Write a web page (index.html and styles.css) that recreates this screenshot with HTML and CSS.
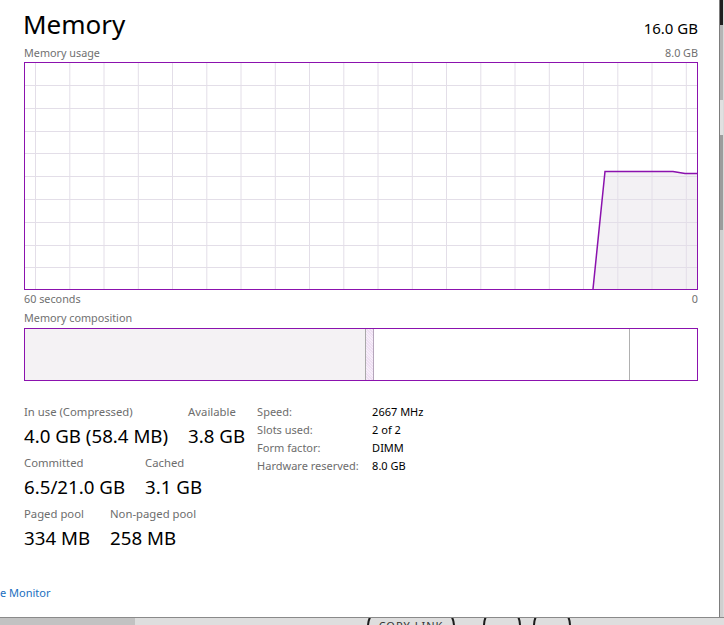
FILE: index.html
```html
<!DOCTYPE html>
<html lang="en">
<head>
    <meta charset="UTF-8">
    <meta name="viewport" content="width=device-width, initial-scale=1.0">
    <title>Memory</title>
    <link rel="stylesheet" href="styles.css">
</head>
<body>
    <div class="screen">
        <div class="window">
            <div class="title-row">
                <h1>Memory</h1>
                <span class="total">16.0 GB</span>
            </div>
            <div class="axis-row">
                <span>Memory usage</span>
                <span>8.0 GB</span>
            </div>
            <div class="graph">
                <svg width="672" height="226" viewBox="0 0 672 226">
                    <polygon class="area" points="568,226 580,108 648,108 660,110 672,110 672,226"/>
                    <g class="grid">
                        <line x1="10.5" y1="0" x2="10.5" y2="226"/>
                        <line x1="44.8" y1="0" x2="44.8" y2="226"/>
                        <line x1="79" y1="0" x2="79" y2="226"/>
                        <line x1="113.3" y1="0" x2="113.3" y2="226"/>
                        <line x1="147.5" y1="0" x2="147.5" y2="226"/>
                        <line x1="181.8" y1="0" x2="181.8" y2="226"/>
                        <line x1="216" y1="0" x2="216" y2="226"/>
                        <line x1="250.3" y1="0" x2="250.3" y2="226"/>
                        <line x1="284.5" y1="0" x2="284.5" y2="226"/>
                        <line x1="318.8" y1="0" x2="318.8" y2="226"/>
                        <line x1="353" y1="0" x2="353" y2="226"/>
                        <line x1="387.3" y1="0" x2="387.3" y2="226"/>
                        <line x1="421.5" y1="0" x2="421.5" y2="226"/>
                        <line x1="455.8" y1="0" x2="455.8" y2="226"/>
                        <line x1="490" y1="0" x2="490" y2="226"/>
                        <line x1="524.3" y1="0" x2="524.3" y2="226"/>
                        <line x1="558.5" y1="0" x2="558.5" y2="226"/>
                        <line x1="592.8" y1="0" x2="592.8" y2="226"/>
                        <line x1="627" y1="0" x2="627" y2="226"/>
                        <line x1="661.3" y1="0" x2="661.3" y2="226"/>
                        <line x1="0" y1="22.5" x2="672" y2="22.5"/>
                        <line x1="0" y1="45.5" x2="672" y2="45.5"/>
                        <line x1="0" y1="68.5" x2="672" y2="68.5"/>
                        <line x1="0" y1="90.5" x2="672" y2="90.5"/>
                        <line x1="0" y1="113.5" x2="672" y2="113.5"/>
                        <line x1="0" y1="136.5" x2="672" y2="136.5"/>
                        <line x1="0" y1="159.5" x2="672" y2="159.5"/>
                        <line x1="0" y1="182.5" x2="672" y2="182.5"/>
                        <line x1="0" y1="204.5" x2="672" y2="204.5"/>
                    </g>
                    <polyline class="trace" points="568,226 580,108.5 648,108.5 660,110.5 672,110.5"/>
                </svg>
            </div>
            <div class="axis-row">
                <span>60 seconds</span>
                <span>0</span>
            </div>
            <div class="caption">Memory composition</div>
            <div class="composition">
                <div class="seg in-use"></div>
                <div class="seg modified"></div>
                <div class="seg standby"></div>
                <div class="seg free"></div>
            </div>

            <div class="stats">
                <div class="stat-block">
                    <div class="stat-row">
                        <div class="stat">
                            <div class="stat-label">In use (Compressed)</div>
                            <div class="stat-value">4.0 GB (58.4 MB)</div>
                        </div>
                        <div class="stat">
                            <div class="stat-label">Available</div>
                            <div class="stat-value">3.8 GB</div>
                        </div>
                    </div>
                    <div class="stat-row">
                        <div class="stat">
                            <div class="stat-label">Committed</div>
                            <div class="stat-value">6.5/21.0 GB</div>
                        </div>
                        <div class="stat">
                            <div class="stat-label">Cached</div>
                            <div class="stat-value">3.1 GB</div>
                        </div>
                    </div>
                    <div class="stat-row">
                        <div class="stat">
                            <div class="stat-label">Paged pool</div>
                            <div class="stat-value">334 MB</div>
                        </div>
                        <div class="stat">
                            <div class="stat-label">Non-paged pool</div>
                            <div class="stat-value">258 MB</div>
                        </div>
                    </div>
                </div>
                <div class="details">
                    <span class="detail-label">Speed:</span><span>2667 MHz</span>
                    <span class="detail-label">Slots used:</span><span>2 of 2</span>
                    <span class="detail-label">Form factor:</span><span>DIMM</span>
                    <span class="detail-label">Hardware reserved:</span><span>8.0 GB</span>
                </div>
            </div>

            <a class="monitor-link" href="#">e Monitor</a>
        </div>
        <div class="edge"></div>
    </div>
    <div class="backdrop">
        <div class="backdrop-left"></div>
        <div class="pills">
            <span class="pill wide">COPY LINK</span>
            <span class="pill round"></span>
            <span class="pill round"></span>
        </div>
    </div>
</body>
</html>
```

FILE: styles.css
```css
body {
    margin: 0;
    width: 724px;
    height: 625px;
    overflow: hidden;
    background: #d9d9d9;
    font-family: "Noto Sans", "Open Sans", sans-serif;
    color: #000;
}
.screen {
    display: flex;
    height: 617px;
}
.window {
    width: 720px;
    box-sizing: border-box;
    padding: 0 21px 16px 24px;
    background: #fff;
    border-right: 1px solid #7d7d7d;
    display: flex;
    flex-direction: column;
}
.edge {
    width: 3px;
    background: linear-gradient(to bottom, #1f1f1f 0, #1f1f1f 25px, #b4b4b4 25px, #b4b4b4 100px, #e0e0e0 100px, #e0e0e0 135px, #9c9c9c 135px, #9c9c9c 230px, #cfcfcf 230px);
}
.title-row {
    display: flex;
    justify-content: space-between;
    align-items: baseline;
    padding-top: 6px;
    height: 36px;
    margin-bottom: 4px;
}
h1 {
    margin: 0 0 0 -1px;
    font-size: 26px;
    font-weight: 400;
    line-height: 36px;
}
.total {
    font-size: 15px;
}
.axis-row {
    display: flex;
    justify-content: space-between;
    font-size: 10.8px;
    line-height: 14px;
    color: #707070;
}
.caption {
    font-size: 10.8px;
    line-height: 14px;
    color: #707070;
    margin: 5px 0 3px;
}
.graph {
    height: 228px;
    border: 1px solid #8b12ae;
    box-sizing: border-box;
    margin: 2px 0;
}
.graph svg {
    display: block;
}
.grid line {
    stroke: #e3dee8;
    stroke-width: 1;
}
.area {
    fill: #f3f1f4;
}
.trace {
    fill: none;
    stroke: #8b12ae;
    stroke-width: 1.5;
}
.composition {
    display: flex;
    height: 53px;
    border: 1px solid #8b12ae;
    box-sizing: border-box;
}
.seg {
    height: 100%;
}
.in-use {
    width: 340px;
    background: #f4f2f4;
    border-right: 1px solid #a9a9a9;
}
.modified {
    width: 7px;
    background: repeating-linear-gradient(45deg, #eedff2 0, #eedff2 1px, #f7eefa 1px, #f7eefa 2px);
    border-right: 1px solid #b5a5bb;
}
.standby {
    width: 255px;
    background: #fff;
    border-right: 1px solid #b0b0b0;
}
.free {
    flex: 1;
    background: #fff;
}
.stats {
    display: flex;
    gap: 12px;
    margin-top: 23px;
}
.stat-block {
    display: flex;
    flex-direction: column;
}
.stat-row {
    display: flex;
    gap: 20px;
    margin-bottom: 7px;
}
.stat-label {
    font-size: 11.3px;
    line-height: 16px;
    color: #6d6d6d;
    margin-bottom: 4px;
}
.stat-value {
    font-size: 18.7px;
    line-height: 24px;
}
.details {
    display: grid;
    grid-template-columns: 115px auto;
    font-size: 11px;
    line-height: 18px;
    margin-top: -1px;
    align-content: start;
}
.detail-label {
    color: #6d6d6d;
}
.monitor-link {
    margin-top: auto;
    margin-left: -24px;
    font-size: 11px;
    line-height: 16px;
    color: #1a6fc0;
    text-decoration: none;
}
.backdrop {
    display: flex;
    height: 8px;
    overflow: hidden;
    border-top: 1px solid #8a8a8a;
    box-sizing: border-box;
}
.backdrop-left {
    width: 135px;
    background: #c2c2c2;
}
.pills {
    flex: 1;
    display: flex;
    gap: 28px;
    padding-left: 232px;
    background: #dedede;
}
.pill {
    flex: none;
    height: 40px;
    margin-top: -12px;
    border: 2px solid #1c1c1c;
    border-radius: 20px;
    box-sizing: border-box;
    font-size: 11px;
    letter-spacing: 1px;
    color: #333;
    text-align: center;
    line-height: 36px;
}
.pill.wide {
    width: 88px;
}
.pill.round {
    width: 38px;
}
.pill.round + .pill.round {
    margin-left: -16px;
}
```
